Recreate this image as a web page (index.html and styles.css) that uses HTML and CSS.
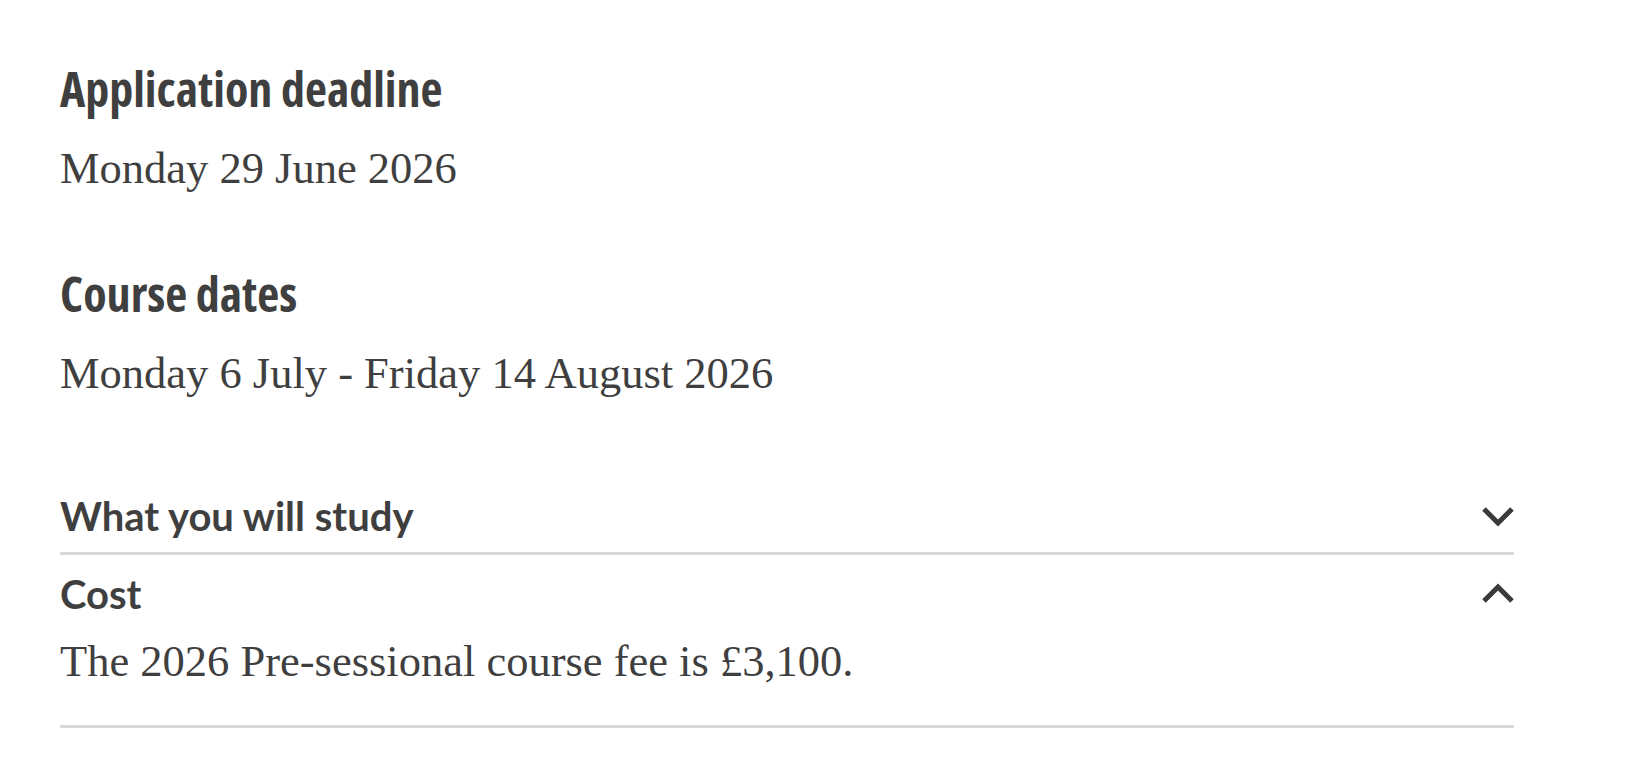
FILE: index.html
```html
<!DOCTYPE html>
<html lang="en">

<head>
    <title>Pre-sessional course</title>
    <link rel="stylesheet" href="styles.css">
</head>

<body>
    <div id="course">
        <div class="fact">
            <h2>Application deadline</h2>
            <p>Monday 29 June 2026</p>
        </div>

        <div class="fact">
            <h2>Course dates</h2>
            <p>Monday 6 July - Friday 14 August 2026</p>
        </div>

        <div class="accordion">
            <div class="acc-item">
                <div class="acc-head">
                    <h3>What you will study</h3>
                    <svg class="chevron" width="34" height="22" viewBox="0 0 34 22">
                        <polyline points="3,4 17,18 31,4" />
                    </svg>
                </div>
            </div>

            <div class="acc-item open">
                <div class="acc-head">
                    <h3>Cost</h3>
                    <svg class="chevron" width="34" height="22" viewBox="0 0 34 22">
                        <polyline points="3,18 17,4 31,18" />
                    </svg>
                </div>
                <div class="acc-body">
                    <p>The 2026 Pre-sessional course fee is £3,100.</p>
                </div>
            </div>
        </div>
    </div>
</body>

</html>
```

FILE: styles.css
```css
body {
    margin: 0;
    background: #fff;
    color: #3f3f3f;
}

#course {
    width: 1454px;
    padding: 60px 0 0 60px;
}

h2 {
    margin: 0;
    font-family: 'Open Sans', sans-serif;
    font-stretch: 75%;
    font-weight: 700;
    font-size: 48px;
    line-height: 57.6px;
}

p {
    margin: 0;
    font-family: 'Liberation Serif', serif;
    font-size: 44.5px;
    line-height: 66.75px;
}

.fact h2 {
    margin-bottom: 17px;
}

.fact + .fact {
    margin-top: 64px;
}

.accordion {
    margin-top: 71px;
}

.acc-item {
    border-bottom: 3px solid #d9d9d9;
}

.acc-head {
    display: flex;
    justify-content: space-between;
    align-items: center;
    padding: 14.5px 0 12px;
}

h3 {
    margin: 0;
    font-family: 'Lato', sans-serif;
    font-weight: 700;
    font-size: 40px;
    line-height: 48px;
}

.chevron {
    display: block;
    margin-right: -1px;
}

.chevron polyline {
    fill: none;
    stroke: #3a3a3a;
    stroke-width: 5;
}

.acc-body {
    padding-bottom: 31px;
}

.acc-body p {
    margin-top: -2px;
}
```
